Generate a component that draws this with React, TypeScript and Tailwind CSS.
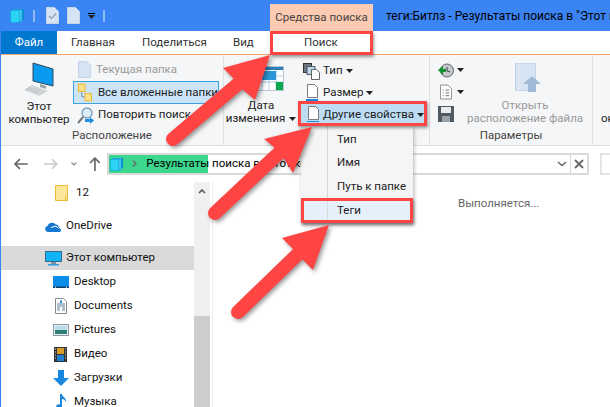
import type { ReactNode } from "react";

const Caret = () => (
  <svg width="7" height="4" viewBox="0 0 7 4" className="shrink-0">
    <path d="M0 0h7L3.5 4z" fill="#222" />
  </svg>
);

const LibraryIcon = ({ size = 15 }: { size?: number }) => (
  <svg width={size} height={size} viewBox="0 0 15 15" className="shrink-0">
    <rect x="5" y="1" width="9" height="11" fill="#0a8fd0" />
    <rect x="3" y="1.5" width="9" height="12" fill="#4cc4f0" stroke="#0a9ad8" strokeWidth="0.6" />
    <rect x="0.5" y="2.5" width="9" height="12" fill="#2bd3f5" stroke="#0a9ad8" strokeWidth="0.6" />
  </svg>
);

const PageIcon = ({ check }: { check?: boolean }) => (
  <svg width="13" height="17" viewBox="0 0 13 17">
    <path d="M0.5 0.5h8l4 4v12h-12z" fill="#d5e3f3" stroke="#c2d4ea" />
    {check && <path d="M3 9l2.5 2.5L10 6.5" fill="none" stroke="#8aa0b8" strokeWidth="1.2" />}
  </svg>
);

const ComputerIcon = () => (
  <svg width="32" height="36" viewBox="0 0 32 36">
    <path d="M10 1l20 6v17L10 19z" fill="#0a9bf0" stroke="#33495c" strokeWidth="1" />
    <path d="M17 22l6 2v3l-6-2z" fill="#9aa3a8" />
    <path d="M9 23L1 28l15 6 9-5z" fill="#d2d4d6" />
    <path d="M7 25l-4 3M10 26l-4 3M13 27l-4 3M16 28l-4 3" stroke="#aeb2b5" strokeWidth="0.8" />
  </svg>
);

const FolderPairIcon = () => (
  <svg width="16" height="19" viewBox="0 0 16 19">
    <rect x="0.5" y="0.5" width="7" height="8" fill="#fbe08a" stroke="#e8b72e" />
    <rect x="7.5" y="10.5" width="7" height="8" fill="#fbe08a" stroke="#e8b72e" />
    <path d="M4 9v5h3" fill="none" stroke="#7a8a99" />
  </svg>
);

const SearchAgainIcon = () => (
  <svg width="17" height="17" viewBox="0 0 17 17">
    <circle cx="10" cy="6" r="5" fill="#dcecf8" stroke="#7c9bb5" strokeWidth="1.3" />
    <path d="M6 10l-5 6" stroke="#6d7a85" strokeWidth="2" />
    <path d="M8 12h5v-2l4 3.5-4 3.5v-2H8z" fill="#1f8fe0" />
  </svg>
);

const CalendarIcon = () => (
  <svg width="30" height="25" viewBox="0 0 30 25">
    <rect x="0.5" y="0.5" width="29" height="24" fill="#fff" stroke="#b6c6d4" />
    <rect x="1" y="1" width="28" height="3" fill="#2c7fb8" />
    <path d="M1 10h28M1 16h28M8 4v20M15 4v20M22 4v20" stroke="#9ec1da" strokeWidth="0.8" />
    <path d="M8 5h14v9H8z" fill="#2c97d8" />
    <rect x="22" y="16" width="7" height="8" fill="#0aa84f" />
  </svg>
);

const TypeIcon = () => (
  <svg width="17" height="17" viewBox="0 0 17 17">
    <rect x="0.5" y="0.5" width="8" height="9" fill="#6b7780" stroke="#333" />
    <rect x="4" y="3.5" width="8" height="8" fill="#bcd9ee" stroke="#556" />
    <path d="M8.5 6.5h5l3 3v7h-8z" fill="#fff" stroke="#666" />
  </svg>
);

const SizeIcon = () => (
  <svg width="12" height="18" viewBox="0 0 12 18" className="ml-[3px]">
    <path d="M1.5 0.5h7l3 3v10h-10z" fill="#fff" stroke="#7a7a7a" />
    <rect x="0" y="15" width="12" height="2" fill="#1c87dc" />
  </svg>
);

const PropsIcon = () => (
  <svg width="12" height="19" viewBox="0 0 12 19">
    <path d="M1.5 0.5h7l3 3v10h-10z" fill="#fff" stroke="#7a7a7a" />
    <rect x="0" y="15" width="12" height="1" fill="#1c87dc" />
    <rect x="0" y="17" width="8" height="1" fill="#1c87dc" />
  </svg>
);

const RecentIcon = () => (
  <svg width="16" height="15" viewBox="0 0 16 15">
    <circle cx="9" cy="7.5" r="6.5" fill="#c4c8cb" stroke="#666" />
    <path d="M9 4v4l3 1" fill="none" stroke="#444" />
    <path d="M0 7l5-4v3h3v3H5v3z" fill="#12932f" />
  </svg>
);

const ListIcon = () => (
  <svg width="13" height="16" viewBox="0 0 13 16">
    <path d="M0.5 0.5h8l4 4v11h-12z" fill="#fff" stroke="#888" />
    <path d="M3 6h1M6 6h4M3 9h1M6 9h4M3 12h1M6 12h4" stroke="#666" />
  </svg>
);

const SaveIcon = () => (
  <svg width="16" height="16" viewBox="0 0 16 16">
    <path d="M0 0h16v16H0z" fill="#4f5a62" />
    <rect x="3" y="1" width="10" height="6" fill="#e8ecef" />
    <rect x="4" y="10" width="8" height="6" fill="#9aa3a9" />
  </svg>
);

const OpenLocationIcon = () => (
  <svg width="26" height="29" viewBox="0 0 26 29">
    <rect x="0.5" y="0.5" width="20" height="27" fill="#d6e4f3" stroke="#c3d4e6" />
    <path d="M4 0.5v27" stroke="#e6eef8" />
    <path d="M17 13l9 8h-5v8h-8v-8H8z" fill="#9fb9d6" />
  </svg>
);

const FolderIcon = () => (
  <svg width="13" height="16" viewBox="0 0 13 16">
    <path d="M0.5 0.5h12v15H0.5z" fill="#fde59a" stroke="#edbb35" />
    <path d="M10.5 10.5v5" stroke="#edbb35" />
  </svg>
);

const OneDriveIcon = () => (
  <svg width="17" height="11" viewBox="0 0 17 11">
    <path d="M3 11a3 3 0 01-.6-5.9A5 5 0 0111 3.5 3.6 3.6 0 0114 7a2.2 2.2 0 011 4z" fill="#1578d0" />
    <path d="M6 6.5L11 5l2.5 2.5" fill="none" stroke="#fff" strokeWidth="1" />
  </svg>
);

const MonitorIcon = () => (
  <svg width="17" height="15" viewBox="0 0 17 15">
    <rect x="0.5" y="0.5" width="16" height="10" fill="#10b4f5" stroke="#3a6a8a" />
    <rect x="6" y="11" width="5" height="2" fill="#7a96a8" />
    <rect x="3" y="13" width="11" height="1.5" fill="#2f9be0" />
  </svg>
);

const DesktopIcon = () => (
  <svg width="16" height="12" viewBox="0 0 16 12">
    <rect x="0" y="0" width="16" height="12" fill="#0a8ce8" />
    <rect x="0" y="10.5" width="16" height="1.5" fill="#143e66" />
    <rect x="2" y="10.7" width="1" height="1" fill="#fff" />
    <rect x="13" y="10.7" width="1" height="1" fill="#fff" />
  </svg>
);

const DocumentsIcon = () => (
  <svg width="12" height="16" viewBox="0 0 12 16" className="ml-[2px]">
    <path d="M0.5 0.5h8l3 3v12h-11z" fill="#fff" stroke="#8a8a8a" />
    <path d="M5 3l1-1 1 1v2H5z" fill="#1e8fe0" />
    <path d="M2 6h8M2 8h8M2 10h3M7 10h3M2 12h3M7 12h3" stroke="#5f7f96" />
  </svg>
);

const PicturesIcon = () => (
  <svg width="16" height="12" viewBox="0 0 16 12">
    <rect x="0.5" y="0.5" width="15" height="11" fill="#e6eef2" stroke="#8b9aa3" />
    <rect x="2" y="2" width="12" height="4" fill="#bcdcec" />
    <rect x="2" y="6" width="12" height="4" fill="#2f7f78" />
  </svg>
);

const VideoIcon = () => (
  <svg width="13" height="15" viewBox="0 0 13 15" className="ml-[1px]">
    <rect x="0" y="0" width="13" height="15" fill="#333" />
    <rect x="3" y="1" width="7" height="6" fill="#d99a2a" />
    <rect x="3" y="8" width="7" height="6" fill="#1e7fd0" />
    <path d="M1 2h1M1 5h1M1 8h1M1 11h1M11 2h1M11 5h1M11 8h1M11 11h1" stroke="#ddd" />
  </svg>
);

const DownloadIcon = () => (
  <svg width="16" height="16" viewBox="0 0 16 16">
    <path d="M5 0h6v8h5l-8 8-8-8h5z" fill="#1787e0" />
  </svg>
);

const MusicIcon = () => (
  <svg width="11" height="16" viewBox="0 0 11 16" className="ml-[3px]">
    <path d="M4 0h2c0 3 5 4 4 8-1-2-2-3-4-3v8a3 3 0 11-2-2.6z" fill="#1787e0" />
  </svg>
);

const TreeRow = ({ icon, label, indent, active }: { icon: ReactNode; label: string; indent: string; active?: boolean }) => (
  <div className={`flex h-6 items-center ${indent} ${active ? "bg-[#d9d9d9]" : ""}`}>
    <div className="flex w-[21px] shrink-0 items-center">{icon}</div>
    <span className="text-[11.5px] text-[#111]">{label}</span>
  </div>
);

const SmallCommand = ({ icon, label }: { icon: ReactNode; label: string }) => (
  <div className="flex h-[22px] items-center gap-[3px] pl-[5px]">
    <div className="flex w-[17px] shrink-0 justify-start">{icon}</div>
    <span className="whitespace-nowrap text-[11.5px] text-[#222]">{label}</span>
    <Caret />
  </div>
);

const GroupLabel = ({ children }: { children: ReactNode }) => (
  <div className="h-[18px] text-center text-[11.5px] leading-[16px] text-[#444]">{children}</div>
);

const Arrow = ({ tail, neck, head }: { tail: number[]; neck: number[]; head: string }) => (
  <g>
    <line x1={tail[0]} y1={tail[1]} x2={neck[0]} y2={neck[1]} stroke="#ff4444" strokeWidth="14" strokeLinecap="round" />
    <polygon points={head} fill="#ff4444" />
  </g>
);

export default function App() {
  return (
    <div className="relative h-[407px] w-[610px] overflow-hidden border-l border-[#3b84f4] bg-white font-['Roboto','Noto_Sans',sans-serif]">
      {/* title bar */}
      <div className="flex h-[31px] items-center bg-[#3b84f4]">
        <div className="flex w-[269px] shrink-0 items-center pl-[9px]">
          <LibraryIcon />
          <div className="ml-[8px] h-[12px] w-[2px] bg-[#8fb8f4]" />
          <div className="ml-[11px]">
            <PageIcon check />
          </div>
          <div className="ml-[8px]">
            <PageIcon />
          </div>
          <div className="ml-[8px] flex flex-col items-center gap-[1px]">
            <div className="h-px w-[7px] bg-black" />
            <Caret />
          </div>
          <div className="ml-[8px] h-[12px] w-[2px] bg-[#8fb8f4]" />
        </div>
        <div className="flex h-[27px] w-[103px] shrink-0 items-center justify-center self-end whitespace-nowrap bg-[#fdcab2] text-[11.5px] text-[#444]">
          Средства поиска
        </div>
        <span className="ml-[13px] whitespace-nowrap text-[12px] text-black">
          теги:Битлз - Результаты поиска в "Этот компьютер"
        </span>
      </div>

      {/* tabs */}
      <div className="flex h-[24px] items-stretch border-b border-[#f5a56e] text-[11.5px] text-[#333]">
        <div className="flex w-[56px] items-center justify-center bg-[#0078d0] text-white">Файл</div>
        <div className="flex w-[85px] items-center pl-[14px]">Главная</div>
        <div className="flex w-[91px] items-center">Поделиться</div>
        <div className="flex w-[71px] items-center">Вид</div>
        <div className="flex items-center">Поиск</div>
      </div>

      {/* ribbon */}
      <div className="flex h-[91px] border-b border-[#dcdddf] bg-[#f5f6f7]">
        <div className="flex w-[223px] shrink-0 flex-col border-r border-[#e0e1e3]">
          <div className="flex flex-1">
            <div className="flex w-[72px] flex-col items-center pl-[4px] pt-[7px] text-center text-[11.5px] leading-[13px] text-[#222]">
              <ComputerIcon />
              <span className="mt-[2px]">Этот</span>
              <span>компьютер</span>
            </div>
            <div className="w-[146px] pt-[3px]">
              <div className="flex h-[23px] items-center gap-[5px] pl-[5px] text-[11.5px] text-[#999]">
                <PageIcon />
                <span className="whitespace-nowrap">Текущая папка</span>
              </div>
              <div className="flex h-[23px] items-center gap-[5px] border border-[#3fa2e0] bg-[#cce4f7] pl-[4px] text-[11.5px] text-[#222]">
                <FolderPairIcon />
                <span className="whitespace-nowrap">Все вложенные папки</span>
              </div>
              <div className="flex h-[22px] items-center gap-[4px] pl-[4px] text-[11.5px] text-[#222]">
                <SearchAgainIcon />
                <span className="whitespace-nowrap">Повторить поиск</span>
              </div>
            </div>
          </div>
          <GroupLabel>Расположение</GroupLabel>
        </div>

        <div className="flex w-[206px] shrink-0 flex-col border-r border-[#e0e1e3]">
          <div className="flex flex-1">
            <div className="flex w-[74px] shrink-0 flex-col items-center pt-[11px] text-center text-[11.5px] leading-[13px] text-[#222]">
              <div className="pl-[16px]">
                <CalendarIcon />
              </div>
              <span className="mt-[8px]">Дата</span>
              <span className="flex items-center gap-[4px] whitespace-nowrap">
                изменения
                <Caret />
              </span>
            </div>
            <div className="w-[130px] pt-[5px]">
              <SmallCommand icon={<TypeIcon />} label="Тип" />
              <SmallCommand icon={<SizeIcon />} label="Размер" />
              <div className="ml-[3px] flex h-[22px] w-[123px] items-center gap-[3px] bg-[#bcdcf3] pl-[5px]">
                <div className="flex w-[14px] shrink-0 justify-center">
                  <PropsIcon />
                </div>
                <span className="whitespace-nowrap text-[11.5px] text-[#222]">Другие свойства</span>
                <Caret />
              </div>
            </div>
          </div>
          <GroupLabel>&nbsp;</GroupLabel>
        </div>

        <div className="flex w-[163px] shrink-0 flex-col border-r border-[#e0e1e3]">
          <div className="flex flex-1">
            <div className="w-[34px] shrink-0 pl-[8px] pt-[4px]">
              <div className="flex h-[22px] items-center gap-[3px]">
                <RecentIcon />
                <Caret />
              </div>
              <div className="flex h-[22px] items-center gap-[5px] pl-[2px]">
                <ListIcon />
                <Caret />
              </div>
              <div className="flex h-[22px] items-center">
                <SaveIcon />
              </div>
            </div>
            <div className="flex flex-1 flex-col items-center pr-[6px] pt-[8px] text-center text-[11.5px] leading-[13px] text-[#999]">
              <div className="ml-[6px]">
                <OpenLocationIcon />
              </div>
              <span className="mt-[7px]">Открыть</span>
              <span className="whitespace-nowrap">расположение файла</span>
            </div>
          </div>
          <GroupLabel>Параметры</GroupLabel>
        </div>

        <div className="whitespace-nowrap pl-[8px] pt-[55px] text-[11.5px] text-[#222]">окно поиска</div>
      </div>

      {/* nav bar */}
      <div className="flex h-[35px] items-center pl-[13px]">
        <svg width="14" height="12" viewBox="0 0 14 12">
          <path d="M6 1L1 6l5 5M1 6h13" fill="none" stroke="#666" strokeWidth="1.6" />
        </svg>
        <svg width="14" height="12" viewBox="0 0 14 12" className="ml-[16px]">
          <path d="M8 1l5 5-5 5M13 6H0" fill="none" stroke="#ccc" strokeWidth="1.6" />
        </svg>
        <svg width="6" height="4" viewBox="0 0 6 4" className="ml-[13px]">
          <path d="M0.5 0.5L3 3l2.5-2.5" fill="none" stroke="#888" strokeWidth="1.2" />
        </svg>
        <svg width="12" height="14" viewBox="0 0 12 14" className="ml-[12px]">
          <path d="M1 6l5-5 5 5M6 1v13" fill="none" stroke="#666" strokeWidth="1.7" />
        </svg>
        <div className="relative ml-[7px] flex h-[22px] w-[489px] items-center border-2 border-[#d9d9d9]">
          <div className="absolute inset-y-0 left-0 w-[99px] bg-[#3bd78f]" />
          <div className="relative flex items-center whitespace-nowrap text-[11.5px] text-black">
            <div className="ml-[1px]">
              <LibraryIcon size={14} />
            </div>
            <svg width="5" height="7" viewBox="0 0 5 7" className="ml-[8px]">
              <path d="M1 0.5l3 3-3 3" fill="none" stroke="#666" strokeWidth="1.3" />
            </svg>
            <span className="ml-[9px]">Результаты поиска в "Этот компьютер"</span>
          </div>
          <div className="relative ml-auto flex h-full items-center">
            <svg width="10" height="6" viewBox="0 0 10 6" className="mr-[3px]">
              <path d="M1 1l4 3.5L9 1" fill="none" stroke="#666" strokeWidth="1.6" />
            </svg>
            <div className="flex h-full w-[17px] items-center justify-center border-l border-[#d9d9d9]">
              <svg width="10" height="10" viewBox="0 0 10 10">
                <path d="M1 1l8 8M9 1l-8 8" stroke="#666" strokeWidth="1.8" />
              </svg>
            </div>
          </div>
        </div>
        <div className="ml-[11px] h-[22px] w-[10px] border-2 border-r-0 border-[#e4e4e4]" />
      </div>

      {/* body */}
      <div className="flex h-[226px]">
        <div className="w-[193px]">
          <TreeRow icon={<FolderIcon />} label="12" indent="pl-[54px]" />
          <div className="mt-[9px]">
            <TreeRow icon={<OneDriveIcon />} label="OneDrive" indent="pl-[44px]" />
          </div>
          <div className="mt-[8px]">
            <TreeRow icon={<MonitorIcon />} label="Этот компьютер" indent="pl-[44px]" active />
          </div>
          <TreeRow icon={<DesktopIcon />} label="Desktop" indent="pl-[52px]" />
          <TreeRow icon={<DocumentsIcon />} label="Documents" indent="pl-[52px]" />
          <TreeRow icon={<PicturesIcon />} label="Pictures" indent="pl-[52px]" />
          <TreeRow icon={<VideoIcon />} label="Видео" indent="pl-[52px]" />
          <TreeRow icon={<DownloadIcon />} label="Загрузки" indent="pl-[52px]" />
          <TreeRow icon={<MusicIcon />} label="Музыка" indent="pl-[52px]" />
        </div>
        <div className="mt-[1px] flex w-[16px] flex-col bg-[#f0f0f0]">
          <div className="flex h-[134px] justify-center pt-[7px]">
            <svg width="8" height="5" viewBox="0 0 8 5">
              <path d="M1 4l3-3 3 3" fill="none" stroke="#555" strokeWidth="1.6" />
            </svg>
          </div>
          <div className="flex-1 bg-[#cdcdcd]" />
        </div>
        <div className="ml-[2px] w-px bg-[#eeeeee]" />
        <div className="flex-1 pl-[245px] pt-[14px] text-[11.5px] text-[#666]">Выполняется...</div>
      </div>

      {/* open dropdown */}
      <div className="absolute left-[300px] top-[126px] w-[112px] bg-[#f5f5f5] text-[11.5px] text-[#222] shadow-[1px_2px_4px_rgba(0,0,0,0.3)]">
        <div className="absolute inset-y-0 left-[26px] w-px bg-[#d9d9d9]" />
        <div className="flex h-[24px] items-center pl-[36px] pt-[4px]">Тип</div>
        <div className="flex h-[24px] items-center pl-[36px] pt-[2px]">Имя</div>
        <div className="flex h-[24px] items-center pl-[36px] pt-[2px]">Путь к папке</div>
        <div className="flex h-[25px] items-center bg-[#e5f0fb] pl-[36px] pt-[1px]">Теги</div>
      </div>

      {/* red annotation boxes */}
      <div className="absolute left-[269px] top-[31px] h-[24px] w-[103px] border-[3px] border-[#ff4444] shadow-[1px_2px_3px_rgba(0,0,0,0.4)]" />
      <div className="absolute left-[297px] top-[101px] h-[25px] w-[129px] border-[3px] border-[#ff4444] shadow-[1px_2px_3px_rgba(0,0,0,0.4)]" />
      <div className="absolute left-[300px] top-[198px] h-[25px] w-[112px] border-[3px] border-[#ff4444] shadow-[1px_2px_3px_rgba(0,0,0,0.4)]" />

      {/* red arrows */}
      <svg
        width="610"
        height="407"
        viewBox="0 0 610 407"
        className="pointer-events-none absolute -left-px top-0 drop-shadow-[2px_2px_2px_rgba(0,0,0,0.4)]"
      >
        <Arrow tail={[173, 139]} neck={[238, 84]} head="270,55 223,68 233,78 243,90 255,100" />
        <Arrow tail={[215, 213]} neck={[279, 153]} head="312,127 264,139 275,148 284,159 293,173" />
        <Arrow tail={[238, 312]} neck={[298, 254]} head="329,225 282,238 293,249 303,260 313,270" />
      </svg>
    </div>
  );
}
